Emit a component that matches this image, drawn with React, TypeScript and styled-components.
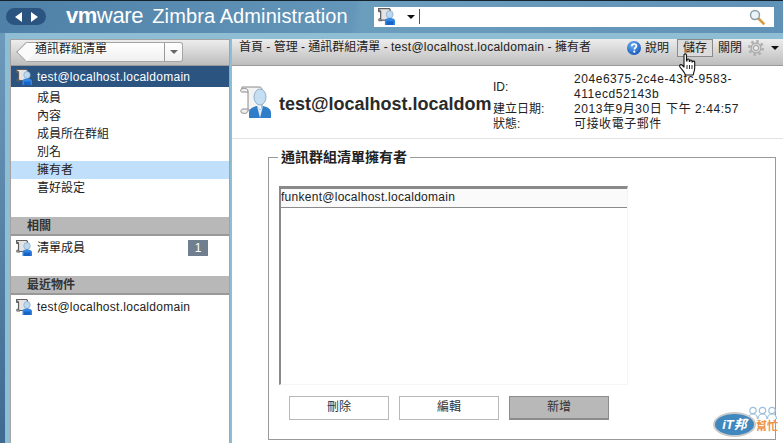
import React from "react";
import styled, { createGlobalStyle } from "styled-components";

const Global = createGlobalStyle`
  html, body { margin: 0; padding: 0; background: #fff; }
  body { font-family: "Liberation Sans", "Noto Sans CJK TC", sans-serif; font-size: 12px; color: #222; overflow: hidden; }
`;

const Page = styled.div`
  position: relative;
  width: 783px;
  height: 443px;
  overflow: hidden;
  display: flex;
  flex-direction: column;
`;

const Lat = styled.span`
  letter-spacing: 0.27px;
`;

const Header = styled.header`
  height: 33px;
  flex: none;
  box-sizing: border-box;
  border-top: 1px solid #16222c;
  background: linear-gradient(100deg, #4f80a7 0%, #6396b9 45%, #6b9dbd 46%, #5f92b6 100%);
  display: flex;
  align-items: center;
  padding: 0 9px 1px 6px;
`;

const NavPill = styled.div`
  width: 40px;
  height: 17px;
  border-radius: 9px;
  background: #2b5480;
  display: flex;
  align-items: center;
  justify-content: space-around;
  padding: 0 4px;
  box-sizing: border-box;
  margin-right: 20px;
`;

const Brand = styled.div`
  color: #fff;
  font-size: 20px;
  line-height: 24px;
  letter-spacing: 0.1px;
  white-space: nowrap;
  width: 308px;
  flex: none;
  margin-top: -2px;
`;

const VmBold = styled.span`
  font-size: 22px;
  font-weight: 700;
  letter-spacing: -0.5px;
`;

const VmLight = styled.span`
  font-size: 22px;
  margin-right: 9px;
  letter-spacing: -0.3px;
`;

const Search = styled.div`
  flex: 1;
  height: 20px;
  background: #fff;
  display: flex;
  align-items: center;
  padding: 0 9px 0 4px;
`;

const SearchCaret = styled.div`
  width: 1px;
  height: 15px;
  background: #555;
  margin-left: 4px;
  flex: none;
`;

const Spacer = styled.div`
  flex: 1;
`;

const Gap = styled.div<{ $w: number }>`
  flex: 0 0 ${(p) => p.$w}px;
`;

const ArrowDown = styled.span<{ $c?: string; $ml?: number }>`
  display: inline-block;
  width: 0;
  height: 0;
  flex: none;
  border-left: 4px solid transparent;
  border-right: 4px solid transparent;
  border-top: 4px solid ${(p) => p.$c || "#111"};
  margin-left: ${(p) => p.$ml ?? 0}px;
`;

const Body = styled.div`
  flex: 1;
  min-height: 0;
  display: flex;
  background: #8fbdd3;
  padding-top: 6px;
  position: relative;
`;

const Gutter = styled.div`
  width: 5px;
  flex: none;
  margin-top: -6px;
  background: linear-gradient(180deg, #6c9abb, #3f6a92);
`;

const SideWrap = styled.div`
  width: 220px;
  margin-left: 5px;
  flex: none;
  border: 1px solid #a3a3a3;
  border-bottom: 0;
  box-sizing: border-box;
  background: #fff;
  display: flex;
  flex-direction: column;
`;

const Bar = styled.div`
  flex: none;
  box-sizing: border-box;
  background: linear-gradient(180deg, #ededed, #bdbdbd);
  border-bottom: 1px solid #999;
`;

const SideBar = styled(Bar)`
  height: 26px;
  padding: 2px 0 0 5px;
`;

const Crumb = styled.div`
  position: relative;
  width: 157px;
  height: 20px;
  box-sizing: border-box;
  background: linear-gradient(180deg, #fff, #f0f0f0);
  border: 1px solid #a5a5a5;
  border-left: 0;
  border-radius: 0 3px 3px 0;
  display: flex;
  align-items: flex-start;
  margin-left: 10px;
`;

const CrumbTip = styled.div`
  position: absolute;
  left: -7px;
  top: 2px;
  width: 13px;
  height: 13px;
  background: #fbfbfb;
  border-left: 1px solid #a5a5a5;
  border-bottom: 1px solid #a5a5a5;
  transform: rotate(45deg);
`;

const CrumbText = styled.span`
  position: relative;
  flex: 1;
  padding-left: 9px;
  line-height: 12px;
  color: #222;
`;

const CrumbArrow = styled.div`
  width: 17px;
  height: 18px;
  border-left: 1px solid #999;
  display: flex;
  align-items: center;
  justify-content: center;
`;

const SelectedRow = styled.div`
  height: 21px;
  background: #2b5480;
  color: #fff;
  display: flex;
  align-items: center;
  padding-left: 5px;
  gap: 5px;
  flex: none;
`;

const Nav = styled.div`
  padding: 2px 0 20px;
  display: flex;
  flex-direction: column;
`;

const NavItem = styled.div<{ $active?: boolean }>`
  height: 18px;
  line-height: 18px;
  padding-left: 26px;
  background: ${(p) => (p.$active ? "#c0dffb" : "transparent")};
  color: #222;
`;

const SectionHead = styled.div`
  height: 19px;
  line-height: 18px;
  box-sizing: border-box;
  background: #b8b8b8;
  border-bottom: 2px solid #999;
  padding-left: 16px;
  font-weight: 700;
  color: #333;
  flex: none;
`;

const SideRow = styled.div<{ $h: number }>`
  height: ${(p) => p.$h}px;
  display: flex;
  align-items: flex-start;
  padding: 4px 21px 0 5px;
  box-sizing: border-box;
  gap: 5px;
  color: #222;
`;

const RowLabel = styled.span`
  flex: 1;
  line-height: 16px;
`;

const Badge = styled.span`
  width: 20px;
  height: 16px;
  background: #6f7f90;
  color: #fff;
  text-align: center;
  line-height: 16px;
`;

const Main = styled.main`
  margin-left: 2px;
  flex: 1;
  min-width: 0;
  background: #fff;
  display: flex;
  flex-direction: column;
`;

const MainBar = styled(Bar)`
  height: 27px;
  display: flex;
  align-items: flex-start;
  padding: 0 0 0 7px;
  position: relative;
`;

const Path = styled.div`
  flex: 1;
  line-height: 16px;
  color: #222;
  white-space: nowrap;
`;

const Actions = styled.div`
  display: flex;
  align-items: center;
  height: 18px;
`;

const Action = styled.span<{ $hover?: boolean; $w: number }>`
  width: ${(p) => p.$w}px;
  height: 18px;
  line-height: 16px;
  box-sizing: border-box;
  text-align: center;
  border: 1px solid ${(p) => (p.$hover ? "#8a8a8a" : "transparent")};
  background: ${(p) => (p.$hover ? "#dcdcdc" : "transparent")};
  color: #222;
`;

const TitleArea = styled.div`
  height: 73px;
  flex: none;
  box-sizing: border-box;
  border-bottom: 1px solid #e2e2e2;
  display: flex;
  padding-left: 8px;
`;

const TitleIcon = styled.div`
  width: 39px;
  flex: none;
  padding-top: 20px;
`;

const Title = styled.h1`
  margin: 0 2px 0 0;
  width: 212px;
  flex: none;
  overflow: hidden;
  white-space: nowrap;
  font-size: 18px;
  line-height: 22px;
  padding-top: 27px;
  font-weight: 700;
  color: #2a2a2a;
`;

const Info = styled.dl`
  margin: 6px 0 0;
  display: grid;
  grid-template-columns: 81px 175px;
  align-content: start;
`;

const InfoLabel = styled.dt`
  line-height: 15px;
  color: #222;
  align-self: center;
`;

const InfoValue = styled.dd`
  margin: 0;
  line-height: 15px;
  color: #222;
  letter-spacing: 0.55px;
`;

const Owners = styled.fieldset`
  margin: 10px 7px 0 36px;
  padding: 21px 10px 0;
  border: 1px solid #999;
  box-sizing: border-box;
  height: 291px;
  min-width: 0;
`;

const OwnersLegend = styled.legend`
  font-weight: 700;
  font-size: 14px;
  line-height: 16px;
  padding: 0 3px;
  margin-left: -1px;
  color: #222;
`;

const ListBox = styled.div`
  width: 349px;
  height: 199px;
  box-sizing: border-box;
  border-top: 3px solid #8a8a8a;
  border-left: 2px solid #8a8a8a;
  border-right: 1px solid #f5f5f5;
  border-bottom: 1px solid #f5f5f5;
`;

const ListRow = styled.div`
  height: 19px;
  line-height: 17px;
  box-sizing: border-box;
  border-bottom: 1px solid #8a8a8a;
  background: #fafafa;
  color: #222;
`;

const Buttons = styled.div`
  display: flex;
  gap: 10px;
  padding: 11px 0 0 10px;
`;

const Btn = styled.div<{ $primary?: boolean }>`
  width: 100px;
  height: 24px;
  box-sizing: border-box;
  text-align: center;
  line-height: 20px;
  color: #333;
  background: ${(p) => (p.$primary ? "#b8b8b8" : "#fff")};
  border: 1px solid ${(p) => (p.$primary ? "#8c8c8c" : "#b8b8b8")};
  border-width: ${(p) => (p.$primary ? "1px 1px 2px" : "1px")};
`;

const Hand = styled.div`
  position: absolute;
  left: 679px;
  top: 53px;
  line-height: 0;
`;

const Logo = styled.div`
  position: absolute;
  left: 713px;
  top: 406px;
  width: 66px;
  height: 31px;
  line-height: 0;
`;

const LogoPeople = styled.div`
  position: absolute;
  left: 35px;
  top: 0;
`;

const LogoBadge = styled.div`
  position: absolute;
  left: 0;
  top: 6px;
  width: 43px;
  height: 25px;
  border-radius: 50%;
  background: #3f87bd;
  border: 2px solid #c9c9c9;
  box-sizing: border-box;
  color: #fff;
  font: italic 700 13px/21px "Liberation Sans", "Noto Sans CJK TC", sans-serif;
  text-align: center;
  white-space: nowrap;
  overflow: hidden;
`;

const LogoTag = styled.div`
  position: absolute;
  left: 43px;
  top: 12px;
  font: 700 11px/14px "Noto Sans CJK TC", sans-serif;
  color: #ee9247;
  white-space: nowrap;
`;

const IconSvg = styled.svg`
  flex: none;
`;

const HelpSvg = styled.svg`
  flex: none;
  margin-right: 1px;
`;

const GearSvg = styled.svg`
  flex: none;
  margin-left: 3px;
`;

const ListIcon = ({ size = 16 }: { size?: number }) => (
  <IconSvg width={size} height={size} viewBox="0 0 32 32">
    <path d="M1 1h19c2 0 3 1 3 3v19H8c-2 0-3-1-3-3V7C5 5 4 5 2 5z" fill="#e4e4e4" stroke="#5f5f5f" strokeWidth="2.4" />
    <path d="M1 1c-1 1-1 5 1 6h3M5 20c-3 0-4 1-3 4h6" fill="none" stroke="#5f5f5f" strokeWidth="2.2" />
    <ellipse cx="22" cy="12" rx="6.500" ry="7" fill="#bcd8f0" stroke="#7fa0bd" strokeWidth="1.200" />
    <path d="M13 32v-8c0-3 3-5 9-5s10 2 10 5v8z" fill="#2f86e6" />
    <path d="M16 25h13v7H16z" fill="#1a62c4" />
  </IconSvg>
);

const BigIcon = () => (
  <svg width="32" height="32" viewBox="0 0 32 32">
    <path d="M2 1h17c2 0 3 1 3 3v20H8V5C8 3 6 2 2 3z" fill="#f3f3f3" stroke="#8a8a8a" />
    <path d="M2 3C0 3 0 6 2 6h6M8 24c0 3-2 4-6 3-2-1-1-4 1-4h5" fill="#eee" stroke="#8a8a8a" />
    <ellipse cx="20" cy="11" rx="6" ry="8" fill="#c6def2" stroke="#8fb0cc" />
    <path d="M9 32v-5c0-4 3-6 8-7l3 4 3-4c5 1 8 3 8 7v5z" fill="#2f7cc8" />
    <path d="M17 20l3 4 3-4-3 12z" fill="#dcecf8" />
  </svg>
);

const Tri = ({ dir }: { dir: "l" | "r" }) => (
  <svg width="7" height="10" viewBox="0 0 7 10">
    <path d={dir === "l" ? "M7 0L0 5l7 5z" : "M0 0l7 5-7 5z"} fill="#fff" />
  </svg>
);

const Magnifier = () => (
  <svg width="16" height="16" viewBox="0 0 16 16">
    <path d="M9 9l5.500 5.500" stroke="#d89a3c" strokeWidth="2.600" strokeLinecap="round" />
    <circle cx="6" cy="6" r="4.500" fill="#eaf4f8" stroke="#8b9da5" strokeWidth="1.400" />
  </svg>
);

const HelpIcon = () => (
  <HelpSvg width="14" height="14" viewBox="0 0 14 14">
    <defs>
      <radialGradient id="hg" cx="40%" cy="30%" r="80%">
        <stop offset="0" stopColor="#6cb0f2" />
        <stop offset="1" stopColor="#0c4fb5" />
      </radialGradient>
    </defs>
    <circle cx="7" cy="7" r="7" fill="url(#hg)" />
    <path d="M4.700 5.300C4.800 3.800 5.800 3 7.100 3c1.400 0 2.300.8 2.300 2 0 1.700-2 1.800-2 3.400" fill="none" stroke="#fff" strokeWidth="1.700" />
    <circle cx="7.300" cy="10.700" r="1.100" fill="#fff" />
  </HelpSvg>
);

const Gear = () => (
  <GearSvg width="16" height="16" viewBox="0 0 16 16">
    <circle cx="8" cy="8" r="5" fill="#d4d4d4" stroke="#9c9c9c" strokeWidth="1" />
    <circle cx="8" cy="8" r="6.700" fill="none" stroke="#b0b0b0" strokeWidth="2.600" strokeDasharray="2.600 2.660" />
    <circle cx="8" cy="8" r="2.500" fill="#eee" stroke="#9a9a9a" strokeWidth="1" />
  </GearSvg>
);

const HandCursor = () => (
  <svg width="18" height="23" viewBox="0 0 18 23">
    <path
      d="M5 2c0-1.500 2.500-1.500 2.500 0v6h.5V7c0-1.300 2.300-1.300 2.300 0v1.500h.5V8c0-1.300 2.200-1.300 2.200 0v1h.5c0-1.200 2.200-1.200 2.200 0v6c0 2.500-1 4-1.500 7H6.500C5.500 19 3 17 1 14c-1-1.700.5-3 2-2l2 2z"
      fill="#fff"
      stroke="#111"
      strokeWidth="1.100"
      strokeLinejoin="round"
    />
    <path d="M8 12v4M10.500 12v4M13 12v4" stroke="#111" strokeWidth=".9" />
  </svg>
);

const WatermarkPeople = () => (
  <svg width="29" height="14" viewBox="0 0 29 14">
    {[5, 14.5, 24].map((x) => (
      <g key={x} fill="#fff" stroke="#9cc0dc" strokeWidth="1.200">
        <path d={`M${x - 4.5} 13c0-3 2-5 4.500-5s4.500 2 4.500 5`} />
        <circle cx={x} cy="4.500" r="3.200" />
      </g>
    ))}
  </svg>
);

export default function App() {
  return (
    <Page>
      <Global />
      <Header>
        <NavPill>
          <Tri dir="l" />
          <Tri dir="r" />
        </NavPill>
        <Brand>
          <VmBold>vm</VmBold>
          <VmLight>ware</VmLight>
          Zimbra Administration
        </Brand>
        <Search>
          <ListIcon size={17} />
          <ArrowDown $ml={12} />
          <SearchCaret />
          <Spacer />
          <Magnifier />
        </Search>
      </Header>
      <Body>
        <Gutter />
        <SideWrap>
          <SideBar>
            <Crumb>
              <CrumbTip />
              <CrumbText>通訊群組清單</CrumbText>
              <CrumbArrow>
                <ArrowDown $c="#666" />
              </CrumbArrow>
            </Crumb>
          </SideBar>
          <SelectedRow>
            <ListIcon />
            <Lat>test@localhost.localdomain</Lat>
          </SelectedRow>
          <Nav>
            <NavItem>成員</NavItem>
            <NavItem>內容</NavItem>
            <NavItem>成員所在群組</NavItem>
            <NavItem>別名</NavItem>
            <NavItem $active>擁有者</NavItem>
            <NavItem>喜好設定</NavItem>
          </Nav>
          <SectionHead>相關</SectionHead>
          <SideRow $h={40}>
            <ListIcon />
            <RowLabel>清單成員</RowLabel>
            <Badge>1</Badge>
          </SideRow>
          <SectionHead>最近物件</SectionHead>
          <SideRow $h={40}>
            <ListIcon />
            <RowLabel>
              <Lat>test@localhost.localdomain</Lat>
            </RowLabel>
          </SideRow>
        </SideWrap>
        <Main>
          <MainBar>
            <Path>
              首頁 - 管理 - 通訊群組清單 - <Lat>test@localhost.localdomain</Lat> - 擁有者
            </Path>
            <Actions>
              <HelpIcon />
              <Action $w={30}>說明</Action>
              <Gap $w={5} />
              <Action $hover $w={36}>儲存</Action>
              <Gap $w={2} />
              <Action $w={30}>關閉</Action>
              <Gear />
              <ArrowDown $ml={7} />
              <Gap $w={4} />
            </Actions>
          </MainBar>
          <TitleArea>
            <TitleIcon>
              <BigIcon />
            </TitleIcon>
            <Title>test@localhost.localdomain</Title>
            <Info>
              <InfoLabel>ID:</InfoLabel>
              <InfoValue>204e6375-2c4e-43fc-9583-411ecd52143b</InfoValue>
              <InfoLabel>建立日期:</InfoLabel>
              <InfoValue>2013年9月30日 下午 2:44:57</InfoValue>
              <InfoLabel>狀態:</InfoLabel>
              <InfoValue>可接收電子郵件</InfoValue>
            </Info>
          </TitleArea>
          <Owners>
            <OwnersLegend>通訊群組清單擁有者</OwnersLegend>
            <ListBox>
              <ListRow>
                <Lat>funkent@localhost.localdomain</Lat>
              </ListRow>
            </ListBox>
            <Buttons>
              <Btn>刪除</Btn>
              <Btn>編輯</Btn>
              <Btn $primary>新增</Btn>
            </Buttons>
          </Owners>
        </Main>
      </Body>
      <Hand>
        <HandCursor />
      </Hand>
      <Logo>
        <LogoPeople>
          <WatermarkPeople />
        </LogoPeople>
        <LogoBadge>iT邦</LogoBadge>
        <LogoTag>幫忙</LogoTag>
      </Logo>
    </Page>
  );
}
